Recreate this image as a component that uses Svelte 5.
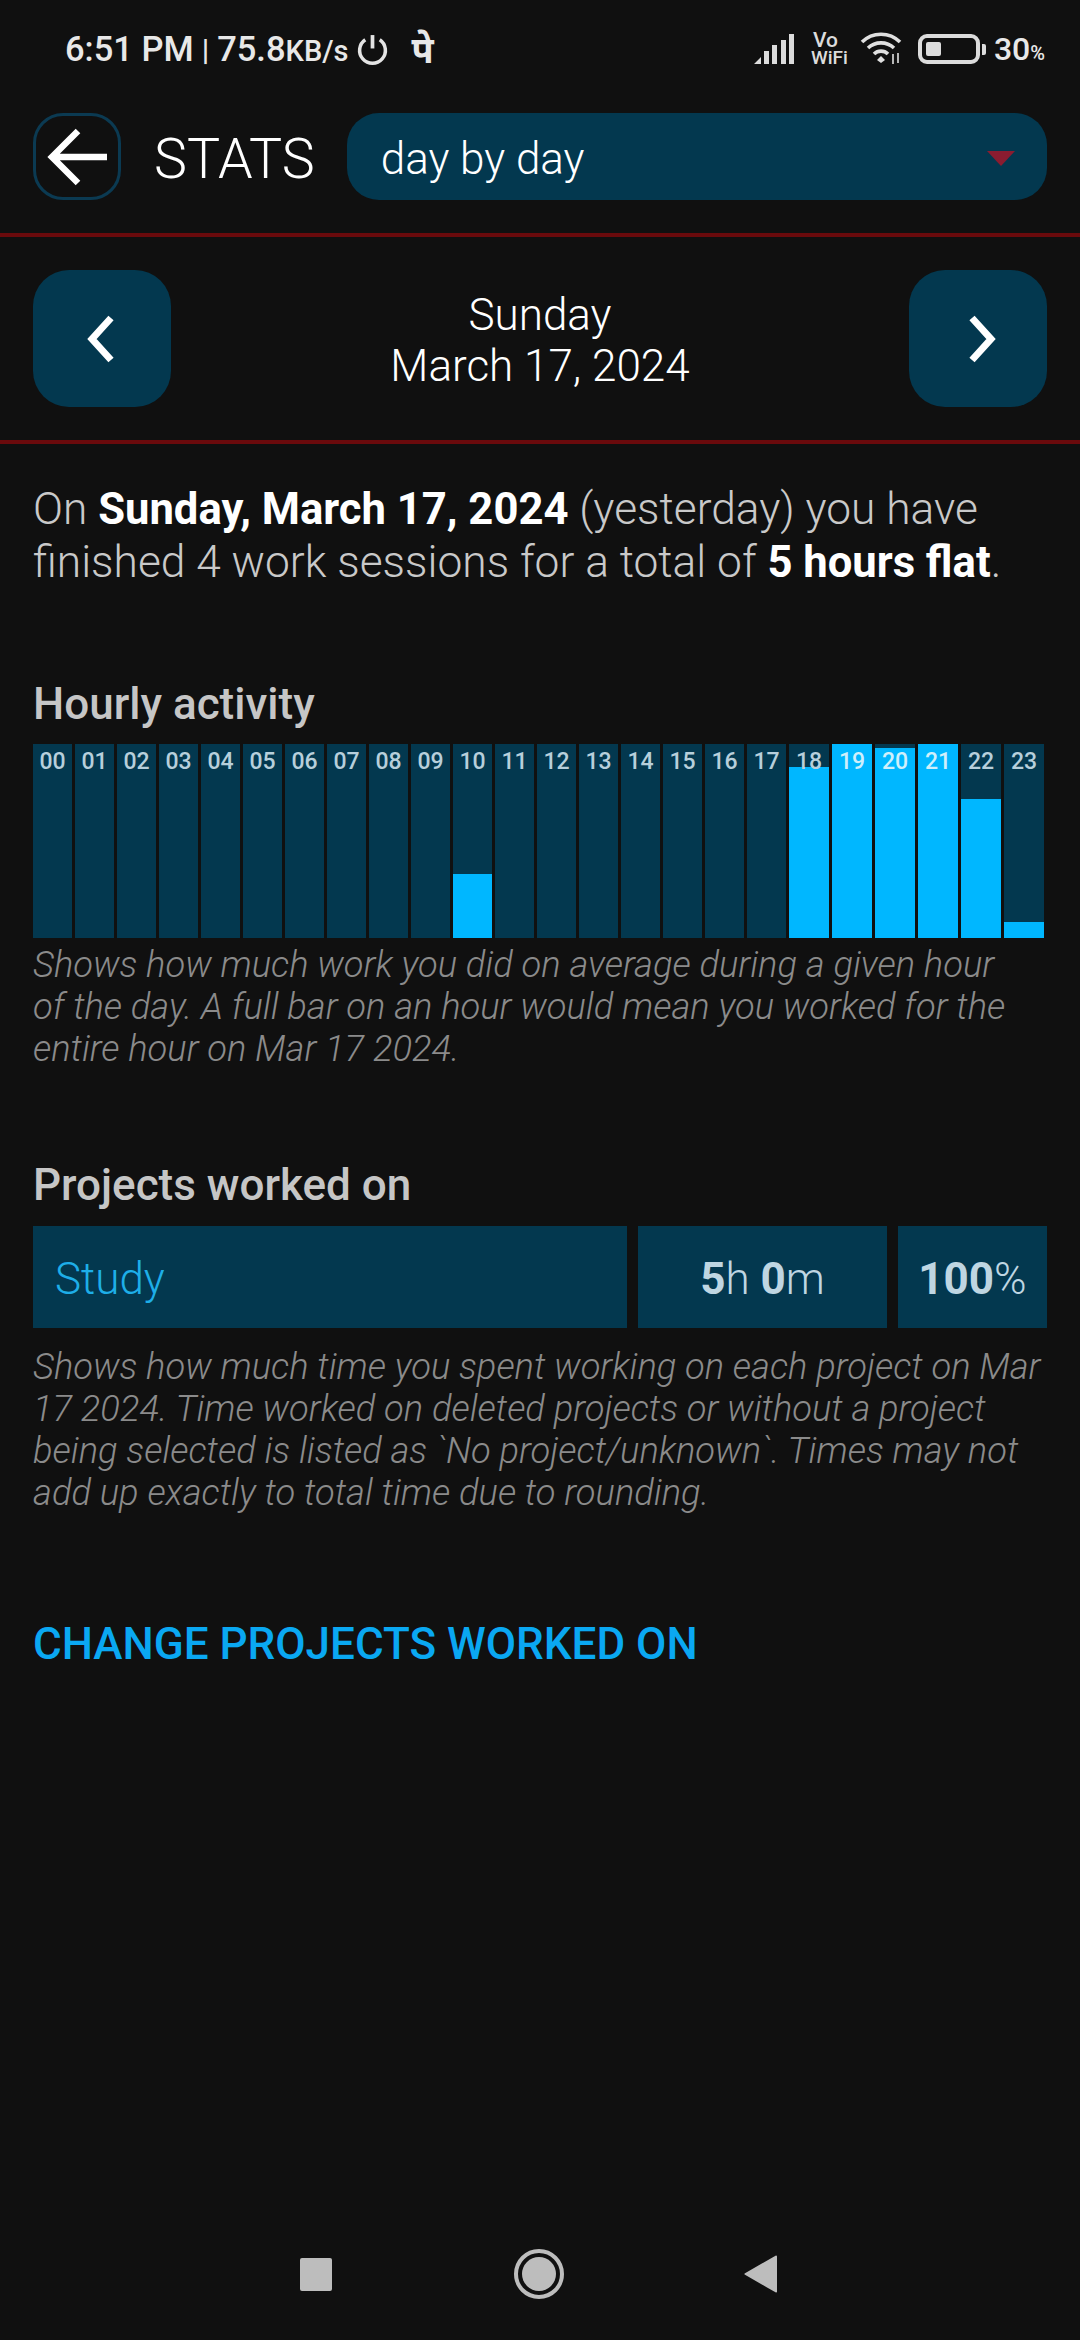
<script>
  const hours = [
    0, 0, 0, 0, 0, 0, 0, 0, 0, 0, 33, 0, 0, 0, 0, 0, 0, 0, 88, 100, 98, 100, 71.5, 8.3
  ].map((fill, i) => ({ label: String(i).padStart(2, '0'), fill }));
</script>

<div class="page">
  <div class="status">
    <div class="status-left">
      <span class="time">6:51 PM</span>
      <span class="sep">|</span>
      <span class="speed">75.8<small>KB/s</small></span>
      <svg class="power" viewBox="0 0 32 32" width="33" height="33">
        <path d="M16 2v13" fill="none" stroke="#e4e4e4" stroke-width="3.600" />
        <path d="M9 6.500a12.500 12.500 0 1 0 14 0" fill="none" stroke="#e4e4e4" stroke-width="3.400" />
      </svg>
      <span class="pe">पे</span>
    </div>
    <div class="status-right">
      <svg viewBox="0 0 40 30" width="40" height="30">
        <path d="M0 30l7-7v7zM10 17h5v13h-5zM18 11h5v19h-5zM27 6h5v24h-5zM35 0h5v30h-5z" fill="#dcdcdc" />
      </svg>
      <div class="vowifi"><span>Vo</span><span>WiFi</span></div>
      <svg class="wifi" viewBox="0 0 44 34" width="44" height="34">
        <path d="M2 10a27 27 0 0 1 38 0M8 16a19 19 0 0 1 26 0M14 22a10 10 0 0 1 14 0" fill="none" stroke="#e0e0e0" stroke-width="3.600" />
        <path d="M21 24l4 4-4 3-4-3z" fill="#e0e0e0" />
        <path d="M33 22v10M38 21v10" stroke="#e0e0e0" stroke-width="1.600" />
      </svg>
      <div class="battery"><div class="battery-level"></div></div>
      <div class="battery-tip"></div>
      <span class="percent">30<small>%</small></span>
    </div>
  </div>

  <header class="topbar">
    <button class="back" aria-label="back">
      <svg viewBox="0 0 60 60" width="60" height="60">
        <path d="M31 4L5 30l26 26M5 30h55" fill="none" stroke="#fff" stroke-width="6.500" />
      </svg>
    </button>
    <h1>STATS</h1>
    <div class="select">
      <span>day by day</span>
      <i class="caret"></i>
    </div>
  </header>

  <nav class="datebar">
    <button class="step prev" aria-label="previous day">
      <svg viewBox="0 0 32 48" width="32" height="48"><path d="M26 3L7 24l19 21" fill="none" stroke="#fff" stroke-width="7" /></svg>
    </button>
    <div class="date">Sunday<br />March 17, 2024</div>
    <button class="step next" aria-label="next day">
      <svg viewBox="0 0 32 48" width="32" height="48"><path d="M6 3l19 21L6 45" fill="none" stroke="#fff" stroke-width="7" /></svg>
    </button>
  </nav>

  <main class="content">
    <p class="summary">On <b>Sunday, March 17, 2024</b> (yesterday) you have finished 4 work sessions for a total of <b>5 hours flat</b>.</p>

    <section class="hourly">
      <h2>Hourly activity</h2>
      <div class="chart">
        {#each hours as hour}
          <div class="bar">
            <div class="fill" style="height: {hour.fill}%"></div>
            <span class="hour" class:lit={hour.fill > 95}>{hour.label}</span>
          </div>
        {/each}
      </div>
      <p class="note">Shows how much work you did on average during a given hour of the day. A full bar on an hour would mean you worked for the entire hour on Mar 17 2024.</p>
    </section>

    <section class="projects">
      <h2>Projects worked on</h2>
      <div class="row">
        <div class="cell name">Study</div>
        <div class="cell spent"><b>5</b>h <b>0</b>m</div>
        <div class="cell share"><b>100</b>%</div>
      </div>
      <p class="note">Shows how much time you spent working on each project on Mar 17 2024. Time worked on deleted projects or without a project being selected is listed as `No project/unknown`. Times may not add up exactly to total time due to rounding.</p>
    </section>

    <button class="change">CHANGE PROJECTS WORKED ON</button>
  </main>

  <footer class="navbar">
    <div class="nav-square"></div>
    <div class="nav-circle"><div></div></div>
    <svg viewBox="0 0 34 38" width="34" height="38"><path d="M32 1.500L1.500 19 32 36.500z" fill="#bdbdbd" stroke="#bdbdbd" stroke-width="2" stroke-linejoin="round" /></svg>
  </footer>
</div>

<style>
  :global(body) {
    background: #101010;
  }

  .page {
    width: 1080px;
    height: 2340px;
    background: #101010;
    color: #fff;
    font-family: Roboto, "Noto Sans", sans-serif;
    display: flex;
    flex-direction: column;
    box-sizing: border-box;
  }

  button {
    border: 0;
    padding: 0;
    font-family: inherit;
    background: none;
    cursor: pointer;
  }

  .status {
    height: 113px;
    box-sizing: border-box;
    padding: 31px 35px 0 65px;
    display: flex;
    justify-content: space-between;
    align-items: flex-start;
    color: #e8e8e8;
  }

  .status-left,
  .status-right {
    display: flex;
    align-items: center;
    height: 36px;
  }

  .time,
  .speed {
    font-size: 34.500px;
    font-weight: 500;
  }

  .speed small {
    font-size: 29px;
  }

  .sep {
    font-size: 30px;
    font-weight: 500;
    margin: 0 8px;
  }

  .power {
    margin-left: 8px;
  }

  .pe {
    font-size: 36px;
    font-weight: 700;
    margin-left: 22px;
    font-family: "Noto Sans", "Noto Sans CJK SC", sans-serif;
  }

  .vowifi {
    display: flex;
    flex-direction: column;
    margin-left: 17px;
    font-size: 19px;
    font-weight: 500;
    line-height: 17px;
    color: #dcdcdc;
    align-items: center;
  }

  .vowifi span:first-child {
    font-size: 21px;
    margin-right: 8px;
  }

  .wifi {
    margin-left: 12px;
  }

  .battery {
    width: 62px;
    height: 30px;
    margin-left: 14px;
    border: 4px solid #dcdcdc;
    border-radius: 9px;
    box-sizing: border-box;
    padding: 4px;
  }

  .battery-level {
    width: 15px;
    height: 100%;
    background: #dcdcdc;
    border-radius: 2px;
  }

  .battery-tip {
    width: 4px;
    height: 11px;
    margin-left: 2px;
    background: #dcdcdc;
    border-radius: 0 2px 2px 0;
  }

  .percent {
    font-size: 32px;
    font-weight: 500;
    margin-left: 8px;
  }

  .percent small {
    font-size: 20px;
  }

  .topbar {
    height: 124px;
    box-sizing: border-box;
    padding: 0 33px 33px;
    display: flex;
    align-items: stretch;
    border-bottom: 4px solid #6a0a0c;
  }

  .back {
    width: 88px;
    border: 3px solid #0b3a52;
    border-radius: 30px;
    box-sizing: border-box;
    display: flex;
    align-items: center;
    justify-content: center;
  }

  h1 {
    margin: 0 32px 0 33px;
    font-size: 55.500px;
    font-weight: 300;
    line-height: 93px;
  }

  .select {
    flex: 1;
    background: #03384f;
    border-radius: 32px;
    padding: 4px 32px 0 34px;
    display: flex;
    align-items: center;
    justify-content: space-between;
    font-size: 44px;
    font-weight: 300;
  }

  .caret {
    width: 0;
    height: 0;
    border-left: 14px solid transparent;
    border-right: 14px solid transparent;
    border-top: 15px solid #8a1c30;
  }

  .datebar {
    height: 207px;
    box-sizing: border-box;
    padding: 33px 33px 33px;
    display: flex;
    justify-content: space-between;
    align-items: stretch;
    border-bottom: 4px solid #6a0a0c;
  }

  .step {
    width: 138px;
    border-radius: 36px;
    background: #03384f;
    display: flex;
    align-items: center;
    justify-content: center;
  }

  .prev {
    padding-right: 3px;
  }

  .next {
    padding-left: 8px;
  }

  .date {
    align-self: center;
    text-align: center;
    font-size: 44px;
    font-weight: 300;
    line-height: 51px;
    padding-top: 5px;
  }

  .content {
    padding: 0 33px;
    flex: 1;
  }

  .summary {
    margin: 39px 0 0;
    font-size: 44.300px;
    font-weight: 300;
    line-height: 52px;
    color: #c9c9c9;
  }

  .summary b {
    font-size: 43.600px;
    font-weight: 700;
    color: #fff;
  }

  h2 {
    margin: 0;
    font-size: 44px;
    font-weight: 500;
    line-height: 52px;
    color: #c6c6c6;
  }

  .hourly {
    margin-top: 89px;
  }

  .hourly .note {
    max-width: 990px;
  }

  .chart {
    margin-top: 14px;
    width: 1011px;
    height: 194px;
    display: grid;
    grid-template-columns: repeat(18, 39fr) repeat(6, 40fr);
    gap: 3px;
  }

  .bar {
    position: relative;
    background: #03384f;
  }

  .fill {
    position: absolute;
    left: 0;
    right: 0;
    bottom: 0;
    background: #00b7ff;
  }

  .hour {
    position: absolute;
    top: 3px;
    left: 0;
    right: 0;
    text-align: center;
    font-size: 23px;
    font-weight: 500;
    line-height: 30px;
    color: #b7cfdb;
  }

  .hour.lit {
    color: #cfeffb;
  }

  .note {
    margin: 6px 0 0;
    font-size: 36.300px;
    font-style: italic;
    font-weight: 300;
    line-height: 42px;
    color: #8b8b8b;
  }

  .projects {
    margin-top: 89px;
  }

  .row {
    margin-top: 15px;
    height: 102px;
    display: flex;
    gap: 11px;
  }

  .cell {
    background: #03384f;
    display: flex;
    align-items: center;
    font-size: 44px;
    font-weight: 300;
    white-space: pre;
    color: #bfd6e2;
    padding-top: 3px;
    box-sizing: border-box;
  }

  .cell b {
    font-weight: 700;
  }

  .name {
    flex: 1;
    padding-left: 22px;
    color: #1eaee8;
  }

  .spent {
    width: 249px;
    justify-content: center;
  }

  .share {
    width: 149px;
    justify-content: center;
  }

  .projects .note {
    margin-top: 18px;
  }

  .change {
    display: block;
    margin-top: 104px;
    font-size: 44px;
    font-weight: 500;
    line-height: 52px;
    color: #0aa8f2;
  }

  .navbar {
    height: 160px;
    box-sizing: border-box;
    padding: 28px 302px 0 300px;
    display: flex;
    justify-content: space-between;
    align-items: center;
  }

  .nav-square {
    width: 32px;
    height: 33px;
    background: #bdbdbd;
    border-radius: 2px;
  }

  .nav-circle {
    width: 50px;
    height: 50px;
    box-sizing: border-box;
    border: 4px solid #bdbdbd;
    border-radius: 50%;
    padding: 4px;
    margin-left: 2px;
  }

  .nav-circle div {
    width: 100%;
    height: 100%;
    border-radius: 50%;
    background: #bdbdbd;
  }
</style>
